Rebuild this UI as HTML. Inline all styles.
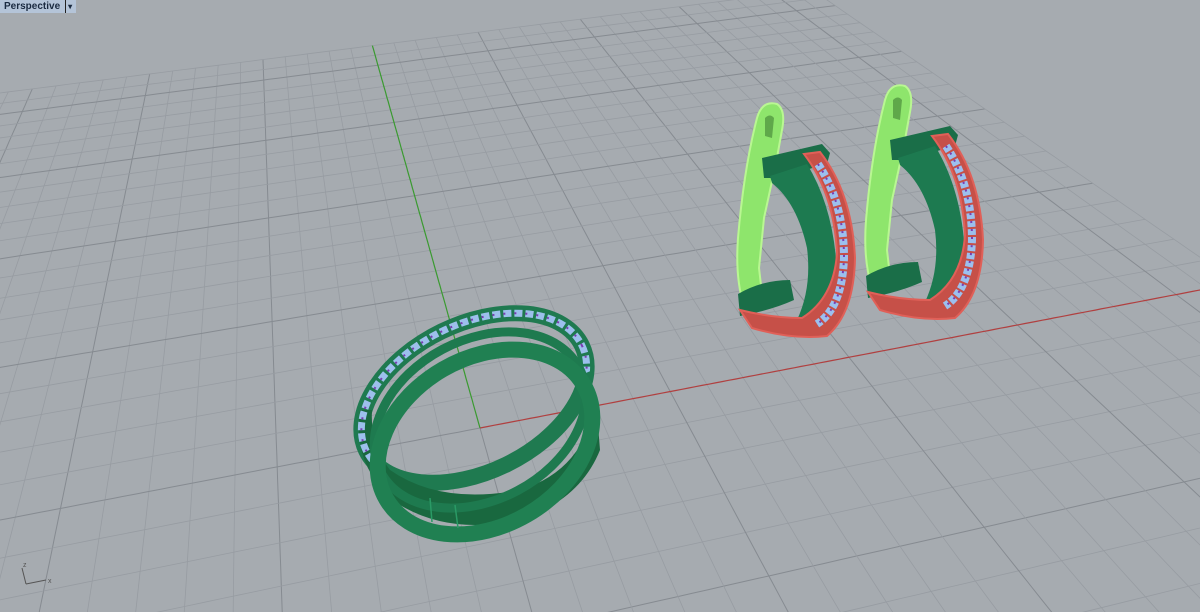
<!DOCTYPE html>
<html><head><meta charset="utf-8">
<style>
html,body{margin:0;padding:0;width:1200px;height:612px;overflow:hidden;background:#a6abb0;}
#lbl{position:absolute;left:0;top:0;height:13px;background:#b4c4d8;font:bold 10px "Liberation Sans",sans-serif;color:#1a2a40;padding:0 4px;line-height:13px;}
#lbl span{display:inline-block;margin-left:5px;border-left:1px solid #222;padding-left:2px;font-size:8px;}
svg{position:absolute;left:0;top:0;overflow:hidden;}
</style></head><body>
<svg id="s" width="1200" height="612" viewBox="0 0 1200 612">
<defs><clipPath id="up"><polygon points="300,0 700,0 700,326 350,470 300,494"/></clipPath></defs>
<g id="grid"></g>
<g id="axes"></g>
<!-- ring -->
<g>
 <ellipse cx="474" cy="398" rx="120" ry="74" transform="rotate(-26 474 398)" fill="none" stroke="#1f7a50" stroke-width="16"/>
 <path d="M360,410 Q352,470 400,505 Q450,535 520,520 Q580,500 600,450 L596,400 Q585,470 520,490 Q440,505 390,470 Q370,445 372,410Z" fill="#19683f"/>
 <g clip-path="url(#up)">
 <ellipse cx="474" cy="398" rx="120" ry="74" transform="rotate(-26 474 398)" fill="none" stroke="#9cc0ec" stroke-width="7" stroke-dasharray="8 3"/>
 <ellipse cx="474" cy="398" rx="120" ry="74" transform="rotate(-26 474 398)" fill="none" stroke="#7a3cb0" stroke-width="2" stroke-dasharray="2 9"/>
 </g>
 <ellipse cx="480" cy="420" rx="112" ry="80" transform="rotate(-28 480 420)" fill="none" stroke="#1e7a4f" stroke-width="9"/>
 <ellipse cx="485" cy="442" rx="114" ry="84" transform="rotate(-30 485 442)" fill="none" stroke="#208052" stroke-width="16"/>
 <path d="M430,498 L432,522 M455,505 L458,528" stroke="#2a9a65" stroke-width="1.5"/>
</g>
<!-- earring 2 -->
<g id="ear">
 <path d="M885,100 Q890,82 905,86 Q914,92 910,112 L904,145 L892,200 L887,250 L890,276 L872,288 Q863,260 866,220 Q872,150 885,100Z" fill="#8ee56c" stroke="#b9f792" stroke-width="2"/>
 <path d="M893,100 Q898,95 902,100 L900,120 L893,118Z" fill="#5fa84a"/>
 <path d="M890,140 L950,126 L958,135 L955,146 L905,160 L892,160Z" fill="#1a6e48"/>
 <path d="M898,158 L935,146 Q962,190 965,255 Q962,300 945,315 L925,302 Q940,270 935,230 Q925,185 900,165Z" fill="#1d7a50"/>
 <path d="M866,276 Q890,262 918,262 L922,282 Q900,292 868,298Z" fill="#1a6e48"/>
 <path d="M932,136 L948,134 Q980,175 983,240 Q982,295 955,318 Q920,322 880,310 L868,292 Q900,300 930,300 Q962,280 965,235 Q962,175 932,136Z" fill="#c65048" stroke="#e06058" stroke-width="2"/>
 <path d="M946,146 Q972,185 972,240 Q970,290 945,306" fill="none" stroke="#9cc0ee" stroke-width="8" stroke-dasharray="6 2"/>
 <path d="M946,146 Q972,185 972,240 Q970,290 945,306" fill="none" stroke="#7a3cb0" stroke-width="2" stroke-dasharray="2 6"/>
</g>
<use href="#ear" transform="translate(-128,18)"/>
<!-- axis icon -->
<g stroke="#555" stroke-width="1" fill="none"><path d="M26,584 L22,568 M26,584 L46,580"/></g>
<text x="23" y="567" font-family="Liberation Sans" font-size="7" fill="#555">z</text>
<text x="48" y="583" font-family="Liberation Sans" font-size="7" fill="#555">x</text>
</svg>
<div id="lbl">Perspective<span>▾</span></div>
<script>
(function(){
var Vx=[6615,-748],Vy=[247,-400],O=[480,428],a=0.0064,b=0.039;
function P(u,v){var w=1+a*u+b*v;return [ (a*u*Vx[0]+b*v*Vy[0]+O[0])/w,(a*u*Vx[1]+b*v*Vy[1]+O[1])/w,w];}
var N=22,g='',ax='';
function line(f,col,sw){var pts=[];for(var i=0;i<=120;i++){var p=f(i/120);if(p[2]>0.03&&Math.abs(p[0])<5000&&Math.abs(p[1])<5000)pts.push(p[0].toFixed(1)+','+p[1].toFixed(1));}
 if(pts.length>1)return '<polyline points="'+pts.join(' ')+'" fill="none" stroke="'+col+'" stroke-width="'+sw+'"/>';return '';}
for(var k=-N;k<=N;k++){
 var col=(k%5==0)?'#868b91':'#979ca2',sw=(k%5==0)?1:0.8;
 if(k!=0){
 g+=line(function(t){return P(k,-N+2*N*t);},col,sw);
 g+=line(function(t){return P(-N+2*N*t,k);},col,sw);}
}
g+=line(function(t){return P(0,-N+N*t);},'#868b91',1);
g+=line(function(t){return P(-N+N*t,0);},'#868b91',1);
ax+=line(function(t){return P(N*t,0);},'#b04040',1.2);
ax+=line(function(t){return P(0,N*t);},'#3a9a30',1.2);
document.getElementById('grid').innerHTML=g;
document.getElementById('axes').innerHTML=ax;
})();
</script>
</body></html>
